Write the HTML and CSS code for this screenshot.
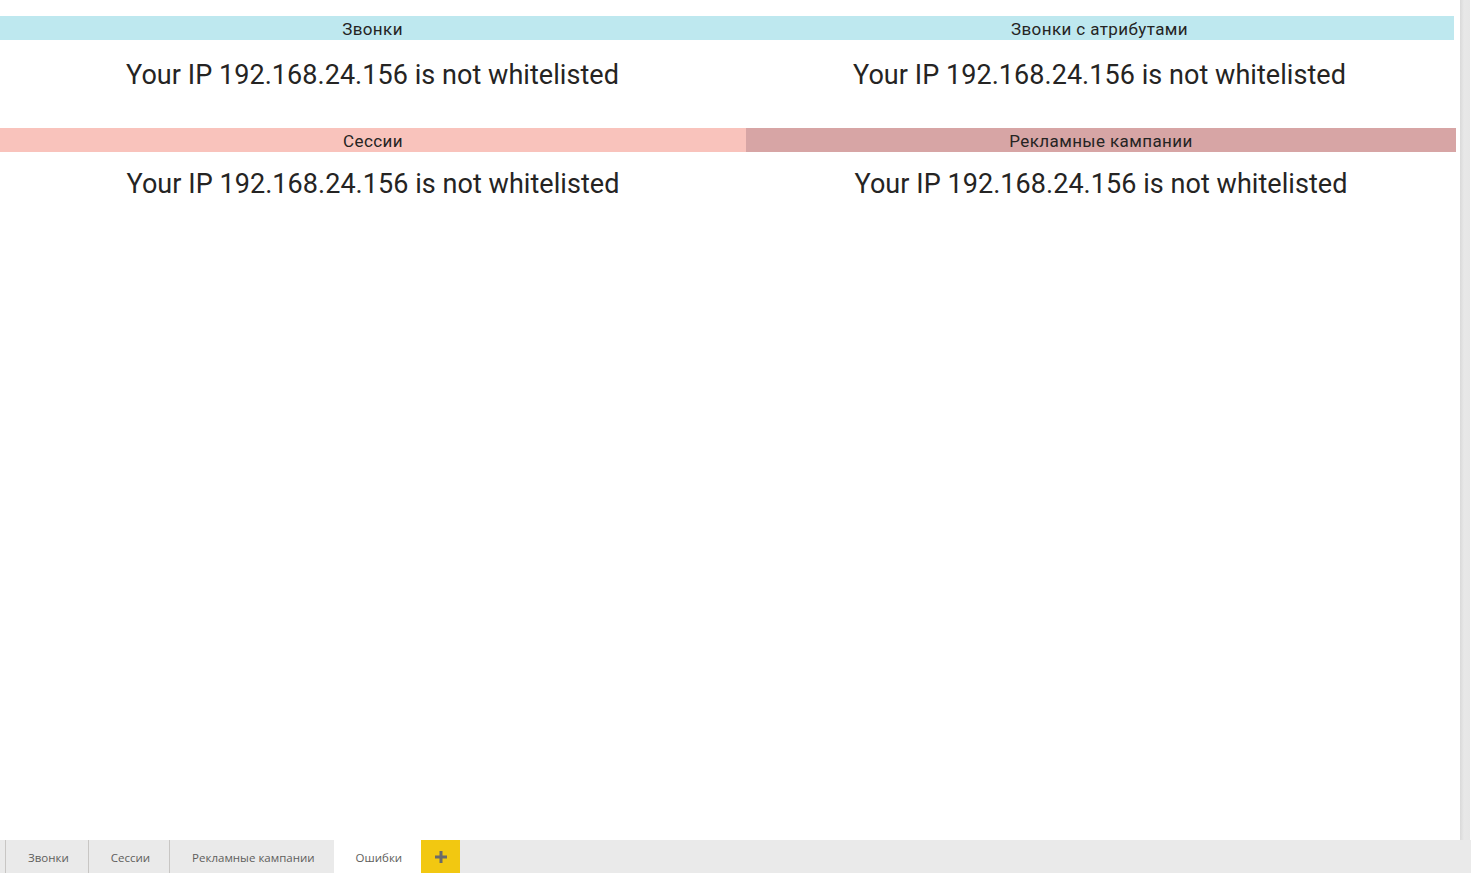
FILE: index.html
```html
<!DOCTYPE html>
<html lang="ru">
<head>
    <meta charset="UTF-8">
    <meta name="viewport" content="width=device-width, initial-scale=1.0">
    <title>Ошибки</title>
    <link rel="stylesheet" href="styles.css">
</head>
<body>
    <div class="report">
        <div class="canvas">
            <!-- Row 1 -->
            <div class="row row-top">
                <div class="visual">
                    <div class="visual-title calls">Звонки</div>
                    <div class="visual-body">Your IP 192.168.24.156 is not whitelisted</div>
                </div>
                <div class="visual">
                    <div class="visual-title calls">Звонки с атрибутами</div>
                    <div class="visual-body">Your IP 192.168.24.156 is not whitelisted</div>
                </div>
            </div>
            <!-- Row 2 -->
            <div class="row row-bottom">
                <div class="visual">
                    <div class="visual-title sessions">Сессии</div>
                    <div class="visual-body">Your IP 192.168.24.156 is not whitelisted</div>
                </div>
                <div class="visual">
                    <div class="visual-title campaigns">Рекламные кампании</div>
                    <div class="visual-body">Your IP 192.168.24.156 is not whitelisted</div>
                </div>
            </div>
        </div>
        <div class="scroll-edge"></div>
    </div>

    <!-- Page tabs -->
    <div class="tabs">
        <div class="tab">Звонки</div>
        <div class="tab">Сессии</div>
        <div class="tab">Рекламные кампании</div>
        <div class="tab active">Ошибки</div>
        <div class="tab-add">
            <svg width="12" height="12" viewBox="0 0 12 12">
                <path d="M6 0v12M0 6h12" stroke="#6b6a69" stroke-width="3"/>
            </svg>
        </div>
    </div>
</body>
</html>
```

FILE: styles.css
```css
html, body {
    margin: 0;
    padding: 0;
    height: 100%;
}
body {
    font-family: 'Roboto', 'DejaVu Sans', sans-serif;
    color: #252423;
    background-color: white;
    display: flex;
    flex-direction: column;
    overflow: hidden;
}
.report {
    flex: 1;
    display: flex;
    min-height: 0;
}
.canvas {
    flex: 1;
    padding-top: 16px;
}
.scroll-edge {
    width: 10px;
    margin-right: 1px;
    background: linear-gradient(90deg, #d9d9d9, #e8e8e8 40%, #e6e6e6);
}
.row {
    display: grid;
}
.row-top {
    grid-template-columns: 745px 709px;
    height: 112px;
}
.row-bottom {
    grid-template-columns: 746px 710px;
}
.visual-title {
    height: 24px;
    line-height: 27px;
    font-size: 17px;
    letter-spacing: 0.4px;
    text-align: center;
}
.visual-title.calls {
    background-color: #bee8ef;
}
.visual-title.sessions {
    background-color: #f9c3bc;
}
.visual-title.campaigns {
    background-color: #d7a5a5;
}
.visual-body {
    text-align: center;
    font-size: 27px;
    padding-top: 19px;
    letter-spacing: 0.05px;
}
.row-bottom .visual-body {
    padding-top: 16px;
}
/* Tabs */
.tabs {
    height: 33px;
    background-color: #eaeaea;
    display: flex;
    padding-left: 5px;
    font-family: 'Open Sans', 'Noto Sans', sans-serif;
    font-size: 11.5px;
    color: #605e5c;
}
.tab {
    border-left: 1px solid #c8c6c4;
    padding: 0 19px 0 22px;
    line-height: 35px;
}
.tab.active {
    background-color: white;
    border-left-color: white;
    padding-left: 21px;
}
.tab-add {
    width: 39px;
    background-color: #f2c811;
    display: flex;
    align-items: center;
    justify-content: center;
}
```
